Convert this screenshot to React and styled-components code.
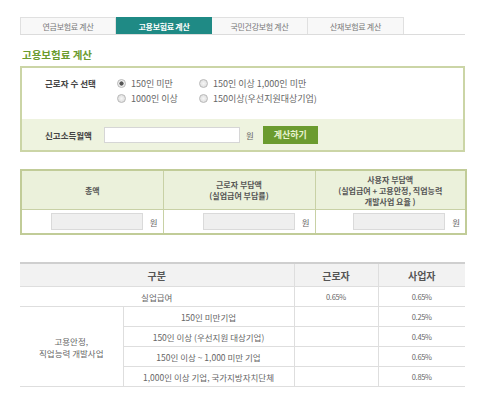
import styled, { createGlobalStyle } from "styled-components";

const GlobalStyle = createGlobalStyle`
  body {
    margin: 0;
    background: #fff;
    font-family: "Noto Sans CJK KR", "Noto Sans", sans-serif;
    color: #555;
  }
`;

const tabs = ["연금보험료 계산", "고용보험료 계산", "국민건강보험 계산", "산재보험료 계산"];

const rates = [
  { name: "150인 미만기업", worker: "", owner: "0.25%" },
  { name: "150인 이상 (우선지원 대상기업)", worker: "", owner: "0.45%" },
  { name: "150인 이상 ~ 1,000 미만 기업", worker: "", owner: "0.65%" },
  { name: "1,000인 이상 기업, 국가지방자치단체", worker: "", owner: "0.85%" },
];

const Page = styled.div`
  width: 445px;
  padding: 17px 20px 0 20px;
`;

const TabBar = styled.div`
  display: flex;
  border-bottom: 1px solid #dcdcdc;
`;

const Tab = styled.div`
  width: 96px;
  height: 17px;
  box-sizing: border-box;
  display: flex;
  align-items: center;
  justify-content: center;
  font-size: 8px;
  letter-spacing: -0.3px;
  color: ${(p) => (p.$active ? "#fff" : "#777")};
  font-weight: ${(p) => (p.$active ? "bold" : "normal")};
  background: ${(p) => (p.$active ? "#1f8a85" : "#f8f8f8")};
  border: 1px solid ${(p) => (p.$active ? "#1f8a85" : "#e0e0e0")};
  border-bottom: none;
  border-left: ${(p) => (p.$first || p.$active ? "" : "none")};
`;

const Title = styled.h2`
  margin: 13px 0 0 2px;
  font-size: 10.5px;
  font-weight: bold;
  color: #6b9b2f;
  line-height: 14px;
`;

const FormBox = styled.div`
  margin-top: 4px;
  border: 2px solid #cbd5a6;
`;

const SelectArea = styled.div`
  height: 51px;
  box-sizing: border-box;
  padding: 8px 0 0 23px;
  display: flex;
`;

const FieldLabel = styled.div`
  width: 72px;
  font-size: 8.5px;
  font-weight: bold;
  color: #444;
  line-height: 15px;
`;

const RadioGrid = styled.div`
  display: grid;
  grid-template-columns: 82px auto;
  grid-auto-rows: 15px;
`;

const RadioItem = styled.label`
  display: flex;
  align-items: center;
  gap: 5px;
  font-size: 9px;
  color: #666;
  white-space: nowrap;
`;

const RadioDot = styled.span`
  width: 7px;
  height: 7px;
  border-radius: 50%;
  border: 1px solid #b8b8b8;
  background: radial-gradient(circle, ${(p) => (p.$checked ? "#555 0 1.8px, #eee 2.4px" : "#f6f6f6, #d8d8d8")});
  flex: none;
`;

const IncomeArea = styled.div`
  height: 31px;
  background: #eef3df;
  display: flex;
  align-items: center;
  padding-left: 23px;
`;

const IncomeLabel = styled.div`
  width: 59px;
  font-size: 8.5px;
  font-weight: bold;
  color: #444;
`;

const TextInput = styled.input`
  width: 136px;
  height: 16px;
  box-sizing: border-box;
  border: 1px solid #d6d6d6;
  background: #fff;
  margin: 0;
`;

const Won = styled.span`
  font-size: 8.5px;
  color: #666;
  margin: 0 ${(p) => p.$right || 0}px 0 ${(p) => p.$left || 6}px;
`;

const CalcButton = styled.button`
  margin-left: 9px;
  width: 55px;
  height: 18px;
  border: none;
  background: #6b9b2f;
  color: #e8f3d0;
  font-family: inherit;
  font-size: 9px;
  font-weight: bold;
  padding: 0;
`;

const ResultTable = styled.table`
  margin-top: 17px;
  width: 445px;
  border-collapse: collapse;
  border: 2px solid #c1cc98;
  table-layout: fixed;
  th, td {
    border: 1px solid #c8d1a5;
    padding: 0;
  }
  th {
    height: 38px;
    background: #ebf1db;
    font-size: 8px;
    font-weight: bold;
    color: #555;
    line-height: 11px;
  }
  td {
    height: 23px;
  }
`;

const AmountCell = styled.div`
  display: flex;
  align-items: center;
  justify-content: flex-end;
  padding-right: 5px;
`;

const AmountInput = styled.input`
  width: 92px;
  height: 17px;
  box-sizing: border-box;
  border: 1px solid #dadada;
  background: #efefef;
  margin: 0;
`;

const RateTable = styled.table`
  margin-top: 27px;
  width: 445px;
  border-collapse: collapse;
  table-layout: fixed;
  border-top: 2px solid #cfcfcf;
  border-bottom: 1px solid #cfcfcf;
  th, td {
    border: 1px solid #dedede;
    text-align: center;
    padding: 0;
  }
  tr > :first-child {
    border-left: none;
  }
  tr > :last-child {
    border-right: none;
  }
  th {
    height: 22px;
    background: #f2f2f2;
    font-size: 10px;
    font-weight: bold;
    color: #555;
    border-top: none;
  }
  td {
    height: 19px;
    font-size: 8.5px;
    color: #666;
  }
`;

const Percent = styled.td`
  && {
    font-size: 7.5px;
    letter-spacing: -0.3px;
  }
`;

export default function App() {
  return (
    <Page>
      <GlobalStyle />
      <TabBar>
        {tabs.map((t, i) => (
          <Tab key={t} $active={i === 1} $first={i === 0}>
            {t}
          </Tab>
        ))}
      </TabBar>

      <Title>고용보험료 계산</Title>

      <FormBox>
        <SelectArea>
          <FieldLabel>근로자 수 선택</FieldLabel>
          <RadioGrid>
            <RadioItem><RadioDot $checked />150인 미만</RadioItem>
            <RadioItem><RadioDot />150인 이상 1,000인 미만</RadioItem>
            <RadioItem><RadioDot />1000인 이상</RadioItem>
            <RadioItem><RadioDot />150이상(우선지원대상기업)</RadioItem>
          </RadioGrid>
        </SelectArea>
        <IncomeArea>
          <IncomeLabel>신고소득월액</IncomeLabel>
          <TextInput type="text" />
          <Won>원</Won>
          <CalcButton>계산하기</CalcButton>
        </IncomeArea>
      </FormBox>

      <ResultTable>
        <colgroup>
          <col style={{ width: 142 }} />
          <col style={{ width: 152 }} />
          <col style={{ width: 151 }} />
        </colgroup>
        <thead>
          <tr>
            <th>총액</th>
            <th>근로자 부담액<br />(실업급여 부담률)</th>
            <th>사용자 부담액<br />(실업급여 + 고용안정, 직업능력<br />개발사업 요율 )</th>
          </tr>
        </thead>
        <tbody>
          <tr>
            {[0, 1, 2].map((i) => (
              <td key={i}>
                <AmountCell>
                  <AmountInput type="text" readOnly />
                  <Won $left={7}>원</Won>
                </AmountCell>
              </td>
            ))}
          </tr>
        </tbody>
      </ResultTable>

      <RateTable>
        <colgroup>
          <col style={{ width: 103 }} />
          <col style={{ width: 171 }} />
          <col style={{ width: 84 }} />
          <col style={{ width: 87 }} />
        </colgroup>
        <thead>
          <tr>
            <th colSpan={2}>구분</th>
            <th>근로자</th>
            <th>사업자</th>
          </tr>
        </thead>
        <tbody>
          <tr>
            <td colSpan={2}>실업급여</td>
            <Percent>0.65%</Percent>
            <Percent>0.65%</Percent>
          </tr>
          {rates.map((r, i) => (
            <tr key={r.name}>
              {i === 0 && (
                <td rowSpan={rates.length}>
                  고용안정,<br />직업능력 개발사업
                </td>
              )}
              <td>{r.name}</td>
              <Percent>{r.worker}</Percent>
              <Percent>{r.owner}</Percent>
            </tr>
          ))}
        </tbody>
      </RateTable>
    </Page>
  );
}
